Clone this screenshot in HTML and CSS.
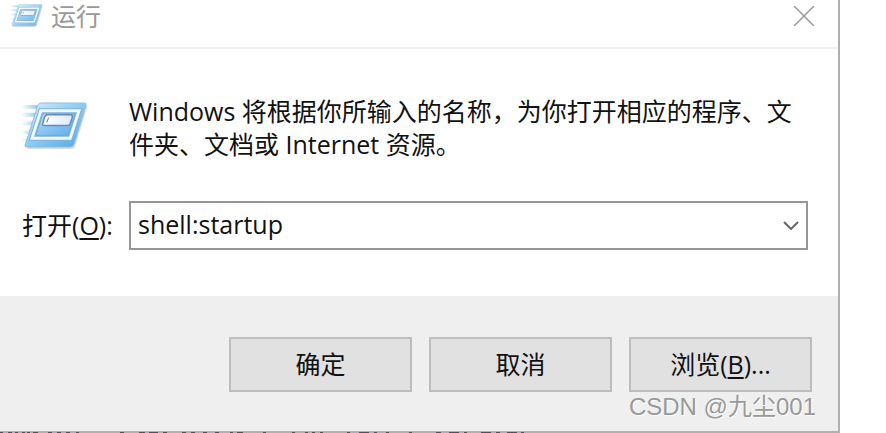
FILE: index.html
```
<!DOCTYPE html>
<html lang="zh-CN">
<head>
<meta charset="utf-8">
<title>运行</title>
<link rel="stylesheet" href="styles.css">
</head>
<body>
<svg class="defs" aria-hidden="true">
  <defs>
    <linearGradient id="face" x1="0" y1="0" x2="1" y2="1">
      <stop offset="0" stop-color="#d5eefb"/><stop offset=".5" stop-color="#8ccbf2"/><stop offset="1" stop-color="#4fa5e2"/>
    </linearGradient>
    <linearGradient id="inner" x1="0" y1="0" x2="1" y2="1">
      <stop offset="0" stop-color="#c2e2f6"/><stop offset=".6" stop-color="#7dbff0"/><stop offset="1" stop-color="#56a9e8"/>
    </linearGradient>
    <linearGradient id="trail" x1="0" y1="0" x2="1" y2="0">
      <stop offset="0" stop-color="#9bd0f2" stop-opacity=".1"/><stop offset="1" stop-color="#78b9e4"/>
    </linearGradient>
    <linearGradient id="field" x1="0" y1="0" x2="1" y2="0">
      <stop offset="0" stop-color="#fff"/><stop offset="1" stop-color="#dceafa"/>
    </linearGradient>
    <symbol id="run" viewBox="0 0 68 50">
      <path d="M0 3h18l-2 4H0zM0 11h15l-2 4H0zM0 20h12l-2 4H0zM0 29h9l-2 4H0zM0 37h6l-2 4H0z" fill="url(#trail)"/>
      <path d="M5 48 18 5Q19 3 21 3H64Q67 3 66 6L54 46Q53 48 51 48H5Z" fill="#8796a5" opacity=".3"/>
      <path d="M3 44 16 3Q17 1 20 1H63Q66 1 65 4L53 43Q52 46 49 46H5Q2 46 3 44Z" fill="url(#face)" stroke="#94bfdc"/>
      <path d="M10 37 19 9H58L49 37Z" fill="url(#inner)" stroke="#7fb2da" stroke-width="5"/>
      <path d="M10 37 19 9H58L49 37Z" fill="none" stroke="#f0f8fb" stroke-width="3"/>
      <path d="M14 34 21 12H54L47 34Z" fill="none" stroke="#74a9d6"/>
      <path d="M21 22 23 15Q24 13 26 13H49Q52 13 51 16L49 22Q48 24 46 24H23Q20 24 21 22Z" fill="url(#field)" stroke="#648bc0" stroke-width="1.5"/>
      <path d="M27 16 25 21" stroke="#777"/>
    </symbol>
  </defs>
</svg>
<main class="dialog">
  <header class="titlebar">
    <svg class="icon-small" aria-hidden="true"><use href="#run"/></svg>
    <h1 class="title">运行</h1>
    <button class="close" type="button" aria-label="关闭">
      <svg class="close-icon" viewBox="0 0 20 20" aria-hidden="true"><path d="M0 0 20 20M20 0 0 20"/></svg>
    </button>
  </header>
  <section class="content">
    <div class="intro">
      <svg class="icon-large" aria-hidden="true"><use href="#run"/></svg>
      <p class="message">Windows 将根据你所输入的名称，为你打开相应的程序、文件夹、文档或 Internet 资源。</p>
    </div>
    <div class="open-row">
      <label class="open-label" for="command">打开(<u>O</u>):</label>
      <div class="combo">
        <input class="command" id="command" type="text" value="shell:startup">
        <button class="drop" type="button" aria-label="显示列表">
          <svg class="drop-icon" viewBox="0 0 16 9" aria-hidden="true"><path d="M1 1 8 8 15 1"/></svg>
        </button>
      </div>
    </div>
  </section>
  <footer class="actions">
    <button class="action" type="button">确定</button>
    <button class="action" type="button">取消</button>
    <button class="action" type="button">浏览(<u>B</u>)...</button>
    <span class="watermark">CSDN @九尘001</span>
  </footer>
</main>
<svg class="underlay" aria-hidden="true"><path d="M0 1H3M8 1h4m3 0h3m4 0h3m2 0h3m3 0h5m10 0h4m5 0h4m5 0h4m6 0h3m41 0h4m15 0h6m4 0h9m5 0h4m15 0h4m5 0h4m8 0h4m8 0h4m11 0h3m4 0h6m20 0h3m26 0h3m10 0h3m4 0h3m5 0h3m24 0h3m9 0h10m5 0h3m9 0h3m20 0h3m24 0h5m8 0h10m5 0h3m14 0h10m5 0h4m7 0h10m4 0h3"/></svg>
</body>
</html>
```
FILE: styles.css
```
* {
  box-sizing: border-box;
}

body {
  margin: 0;
  background: #fff;
  color: #111;
  font: 25px/33px "Open Sans", "Noto Sans CJK SC", sans-serif;
  overflow: hidden;
}

button,
input {
  margin: 0;
  color: inherit;
  font: inherit;
}

u {
  text-decoration-thickness: 2px;
  text-underline-offset: 3px;
}

.defs {
  position: absolute;
  width: 0;
  height: 0;
}

.dialog {
  margin-right: 46px;
  border-right: 2px solid #b0b0b0;
  border-bottom: 2px solid #b0b0b0;
}

.titlebar {
  display: flex;
  align-items: flex-start;
  height: 49px;
  padding: 0 24px 0 10px;
  border-bottom: 2px solid #f2f2f2;
}

.icon-small {
  width: 34px;
  height: 24px;
  margin-top: 4px;
  opacity: 0.85;
}

.title {
  flex: 1;
  margin: 0 0 0 7px;
  color: #999;
  font-size: 25px;
  font-weight: 400;
}

.close {
  display: flex;
  padding: 6px 0;
  border: 0;
  background: none;
}

.close-icon {
  width: 20px;
  height: 20px;
  fill: none;
  stroke: #999;
  stroke-width: 1.5;
}

.content {
  padding: 46px 30px 46px 22px;
}

.intro {
  display: flex;
  gap: 40px;
}

.icon-large {
  flex: none;
  width: 67px;
  height: 49px;
  margin-top: 7px;
}

.message {
  margin: 0;
}

.open-row {
  display: flex;
  align-items: center;
  margin-top: 40px;
}

.open-label {
  flex: none;
  width: 107px;
}

.combo {
  display: flex;
  flex: 1;
  height: 49px;
  border: 2px solid #969696;
  background: #fff;
}

.command {
  flex: 1;
  min-width: 0;
  padding: 0 7px 2px;
  border: 0;
  outline: 0;
  background: none;
}

.drop {
  display: flex;
  align-items: center;
  padding: 0 7px;
  border: 0;
  background: none;
}

.drop-icon {
  width: 16px;
  height: 9px;
  fill: none;
  stroke: #666;
  stroke-width: 2;
}

.actions {
  position: relative;
  display: flex;
  justify-content: flex-end;
  gap: 17px;
  padding: 41px 26px 39px;
  background: #efefef;
}

.action {
  width: 183px;
  height: 55px;
  padding: 0;
  border: 2px solid #bdbdbd;
  background: #e1e1e1;
}

.watermark {
  position: absolute;
  right: 22px;
  bottom: 8px;
  color: #999;
  font: 24px/33px "Liberation Sans", "Noto Sans CJK SC", sans-serif;
  text-shadow: 1px 1px 0 #fff;
}

.underlay {
  position: absolute;
  bottom: 0;
  left: 0;
  width: 600px;
  height: 1px;
  fill: none;
  stroke: #4c5260;
  stroke-width: 2;
}
```
